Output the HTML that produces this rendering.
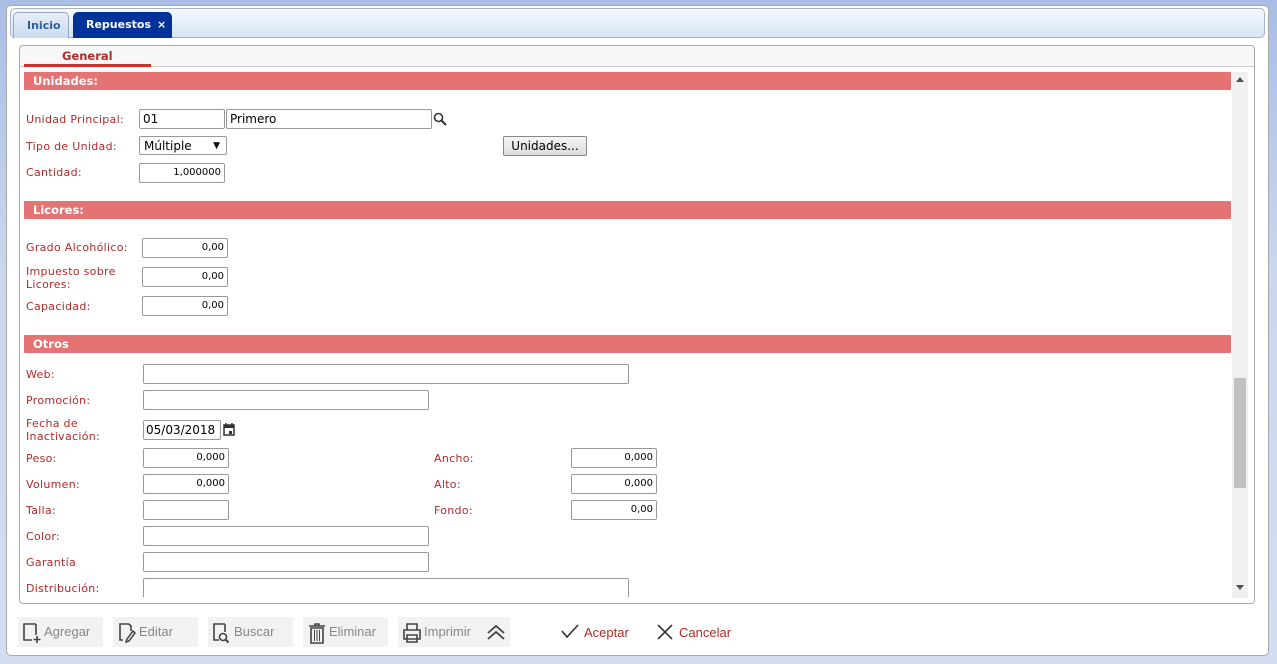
<!DOCTYPE html>
<html><head><meta charset="utf-8"><style>
*{box-sizing:border-box;margin:0;padding:0}
body{width:1277px;height:664px;background:linear-gradient(#a9bde6,#c9d6ee 40%,#d4def0);font-family:"DejaVu Sans","Liberation Sans",sans-serif;font-size:11px;position:relative;overflow:hidden}
.a{position:absolute}
.outer{left:6px;top:5px;width:1263px;height:651px;background:#fff;border:1px solid #a8a8a8;border-radius:5px}
.strip{left:10px;top:8px;width:1255px;height:30px;background:linear-gradient(#f4f8fd,#d8e5f5);border:1px solid #a8b4c4;border-radius:5px}
.tab{top:12px;height:26px;border-radius:5px 5px 0 0;font-weight:bold;font-size:11px;line-height:25px;padding-left:13px}
.panel{left:19px;top:45px;width:1236px;height:559px;border:1px solid #aaa;border-radius:4px;background:#fff}
.phead{left:20px;top:46px;width:1234px;height:21px;background:#f7f7f7;border-bottom:1px solid #ccc;border-radius:4px 4px 0 0}
.bar{left:24px;width:1207px;height:18px;background:#e57373;color:#fff;font-weight:bold;font-size:11.5px;line-height:18px;padding-left:9px;border-radius:1px}
.lb{color:#b22a2a;left:26px;font-size:11px;line-height:13px;letter-spacing:0.3px}
.in{height:20px;border:1px solid #999;border-radius:2px;background:#fff;font-size:11px;line-height:18px;padding:0 3px;color:#000}
.r{text-align:right;font-size:10px}
.btn{top:617px;height:30px;background:#f2f2f2;color:#888;font-size:13px;line-height:30px;font-family:"Liberation Sans",sans-serif}
.btn svg{position:absolute;left:3px;top:4px}
</style></head><body>
<div class="a outer"></div>
<div class="a strip"></div>
<div class="a tab" style="left:13px;width:56px;background:linear-gradient(#e6eef8,#cbdbef);border:1px solid #98a8bc;border-bottom:none;color:#2a5f9a">Inicio</div>
<div class="a tab" style="left:73px;width:99px;background:#003399;color:#fff">Repuestos<span style="position:absolute;left:84px">×</span></div>
<div class="a panel"></div>
<div class="a phead"></div>
<div class="a" style="left:62px;top:49px;color:#b22a2a;font-weight:bold;font-size:11.5px">General</div>
<div class="a" style="left:24px;top:64px;width:127px;height:3px;background:#d32f2f"></div>
<div class="a" style="left:1232px;top:72px;width:16px;height:526px;background:#f0f0f0"></div>
<div class="a" style="left:1234px;top:378px;width:12px;height:110px;background:#c1c1c1"></div>
<div class="a" style="left:1236px;top:77px;width:0;height:0;border:4px solid transparent;border-bottom:5px solid #505050;border-top:none"></div>
<div class="a" style="left:1236px;top:585px;width:0;height:0;border:4px solid transparent;border-top:5px solid #505050;border-bottom:none"></div>

<div class="a bar" style="top:72px">Unidades:</div>
<div class="a lb" style="top:113px">Unidad Principal:</div>
<div class="a in" style="left:139px;top:109px;width:86px;font-size:12px">01</div>
<div class="a in" style="left:226px;top:109px;width:206px;font-size:12px">Primero</div>
<svg class="a" style="left:433px;top:112px" width="14" height="14" viewBox="0 0 14 14"><circle cx="5.5" cy="5.5" r="4" fill="none" stroke="#333" stroke-width="1.6"/><path d="M8.5 8.5L13 13" stroke="#333" stroke-width="2"/></svg>
<div class="a lb" style="top:140px">Tipo de Unidad:</div>
<div class="a in" style="left:139px;top:136px;width:88px;height:19px;font-size:12px;padding-left:4px">Múltiple<span style="position:absolute;right:6px;font-size:9px">▼</span></div>
<div class="a" style="left:503px;top:136px;width:84px;height:20px;border:1px solid #888;border-radius:2px;background:linear-gradient(#f6f6f6,#dcdcdc);font-size:12px;text-align:center;line-height:18px">Unidades...</div>
<div class="a lb" style="top:166px">Cantidad:</div>
<div class="a in r" style="left:139px;top:163px;width:86px">1,000000</div>

<div class="a bar" style="top:201px">Licores:</div>
<div class="a lb" style="top:241px">Grado Alcohólico:</div>
<div class="a in r" style="left:142px;top:238px;width:86px">0,00</div>
<div class="a lb" style="top:265px">Impuesto sobre<br>Licores:</div>
<div class="a in r" style="left:142px;top:267px;width:86px">0,00</div>
<div class="a lb" style="top:300px">Capacidad:</div>
<div class="a in r" style="left:142px;top:296px;width:86px">0,00</div>

<div class="a bar" style="top:335px">Otros</div>
<div class="a lb" style="top:368px">Web:</div>
<div class="a in" style="left:143px;top:364px;width:486px"></div>
<div class="a lb" style="top:394px">Promoción:</div>
<div class="a in" style="left:143px;top:390px;width:286px"></div>
<div class="a lb" style="top:417px">Fecha de<br>Inactivación:</div>
<div class="a in" style="left:143px;top:420px;width:78px;font-size:12px;padding:0 2px">05/03/2018</div>
<svg class="a" style="left:223px;top:423px" width="12" height="13" viewBox="0 0 12 13"><rect x="1" y="2" width="10" height="10" fill="none" stroke="#333" stroke-width="1.5"/><rect x="1" y="2" width="10" height="3" fill="#333"/><rect x="6" y="8" width="3" height="3" fill="#333"/><path d="M3 0v3M9 0v3" stroke="#333" stroke-width="1.5"/></svg>
<div class="a lb" style="top:452px">Peso:</div>
<div class="a in r" style="left:143px;top:448px;width:86px">0,000</div>
<div class="a lb" style="top:478px">Volumen:</div>
<div class="a in r" style="left:143px;top:474px;width:86px">0,000</div>
<div class="a lb" style="top:504px">Talla:</div>
<div class="a in" style="left:143px;top:500px;width:86px"></div>
<div class="a lb" style="top:530px">Color:</div>
<div class="a in" style="left:143px;top:526px;width:286px"></div>
<div class="a lb" style="top:556px">Garantía</div>
<div class="a in" style="left:143px;top:552px;width:286px"></div>
<div class="a lb" style="top:582px">Distribución:</div>
<div class="a in" style="left:143px;top:578px;width:486px;height:19px;border-bottom:none;border-radius:2px 2px 0 0"></div>
<div class="a lb" style="left:434px;top:452px">Ancho:</div>
<div class="a in r" style="left:571px;top:448px;width:86px">0,000</div>
<div class="a lb" style="left:434px;top:478px">Alto:</div>
<div class="a in r" style="left:571px;top:474px;width:86px">0,000</div>
<div class="a lb" style="left:434px;top:504px">Fondo:</div>
<div class="a in r" style="left:571px;top:500px;width:86px">0,00</div>

<div class="a btn" style="left:18px;width:85px;padding-left:26px">Agregar<svg width="22" height="24" viewBox="0 0 22 24"><path d="M15 3H3v16h8M15 3v11" fill="none" stroke="#444" stroke-width="1.6"/><path d="M16 15v7M12.5 18.5h7" stroke="#444" stroke-width="1.6"/></svg></div>
<div class="a btn" style="left:113px;width:85px;padding-left:26px">Editar<svg width="22" height="24" viewBox="0 0 22 24"><path d="M13 3H4v16h3M13 3l2 2v5" fill="none" stroke="#444" stroke-width="1.6"/><path d="M17 10l-6 8-1 3 3-1 6-8z" fill="none" stroke="#444" stroke-width="1.5"/></svg></div>
<div class="a btn" style="left:208px;width:85px;padding-left:26px">Buscar<svg width="22" height="24" viewBox="0 0 22 24"><path d="M14 3H3v16h5M14 3v8" fill="none" stroke="#444" stroke-width="1.6"/><circle cx="12" cy="16" r="3.5" fill="none" stroke="#444" stroke-width="1.6"/><path d="M14.5 18.5l3 3" stroke="#444" stroke-width="2"/></svg></div>
<div class="a btn" style="left:303px;width:85px;padding-left:26px">Eliminar<svg width="22" height="24" viewBox="0 0 22 24"><path d="M3 5h16M9 5V3h4v2M5 7h12v15H5z" fill="none" stroke="#444" stroke-width="1.6"/><path d="M8.5 9v11M11 9v11M13.5 9v11" stroke="#444"/></svg></div>
<div class="a btn" style="left:398px;width:112px;padding-left:26px">Imprimir<svg width="22" height="24" viewBox="0 0 22 24"><path d="M6 9V3h10v6M3 9h16v9H3zM6 14h10v7H6z" fill="none" stroke="#444" stroke-width="1.6"/></svg><svg style="left:88px;top:7px" width="20" height="16" viewBox="0 0 20 16"><path d="M2 9l8-7 8 7M2 15l8-7 8 7" fill="none" stroke="#444" stroke-width="1.8"/></svg></div>
<svg class="a" style="left:560px;top:623px" width="20" height="16" viewBox="0 0 20 16"><path d="M2 8l5 6L18 2" fill="none" stroke="#333" stroke-width="1.6"/></svg>
<div class="a" style="left:584px;top:625px;color:#b22a2a;font-family:'Liberation Sans',sans-serif;font-size:13px">Aceptar</div>
<svg class="a" style="left:656px;top:623px" width="18" height="18" viewBox="0 0 18 18"><path d="M2 2l14 14M16 2L2 16" stroke="#333" stroke-width="1.6"/></svg>
<div class="a" style="left:679px;top:625px;color:#b22a2a;font-family:'Liberation Sans',sans-serif;font-size:13px">Cancelar</div>
</body></html>
